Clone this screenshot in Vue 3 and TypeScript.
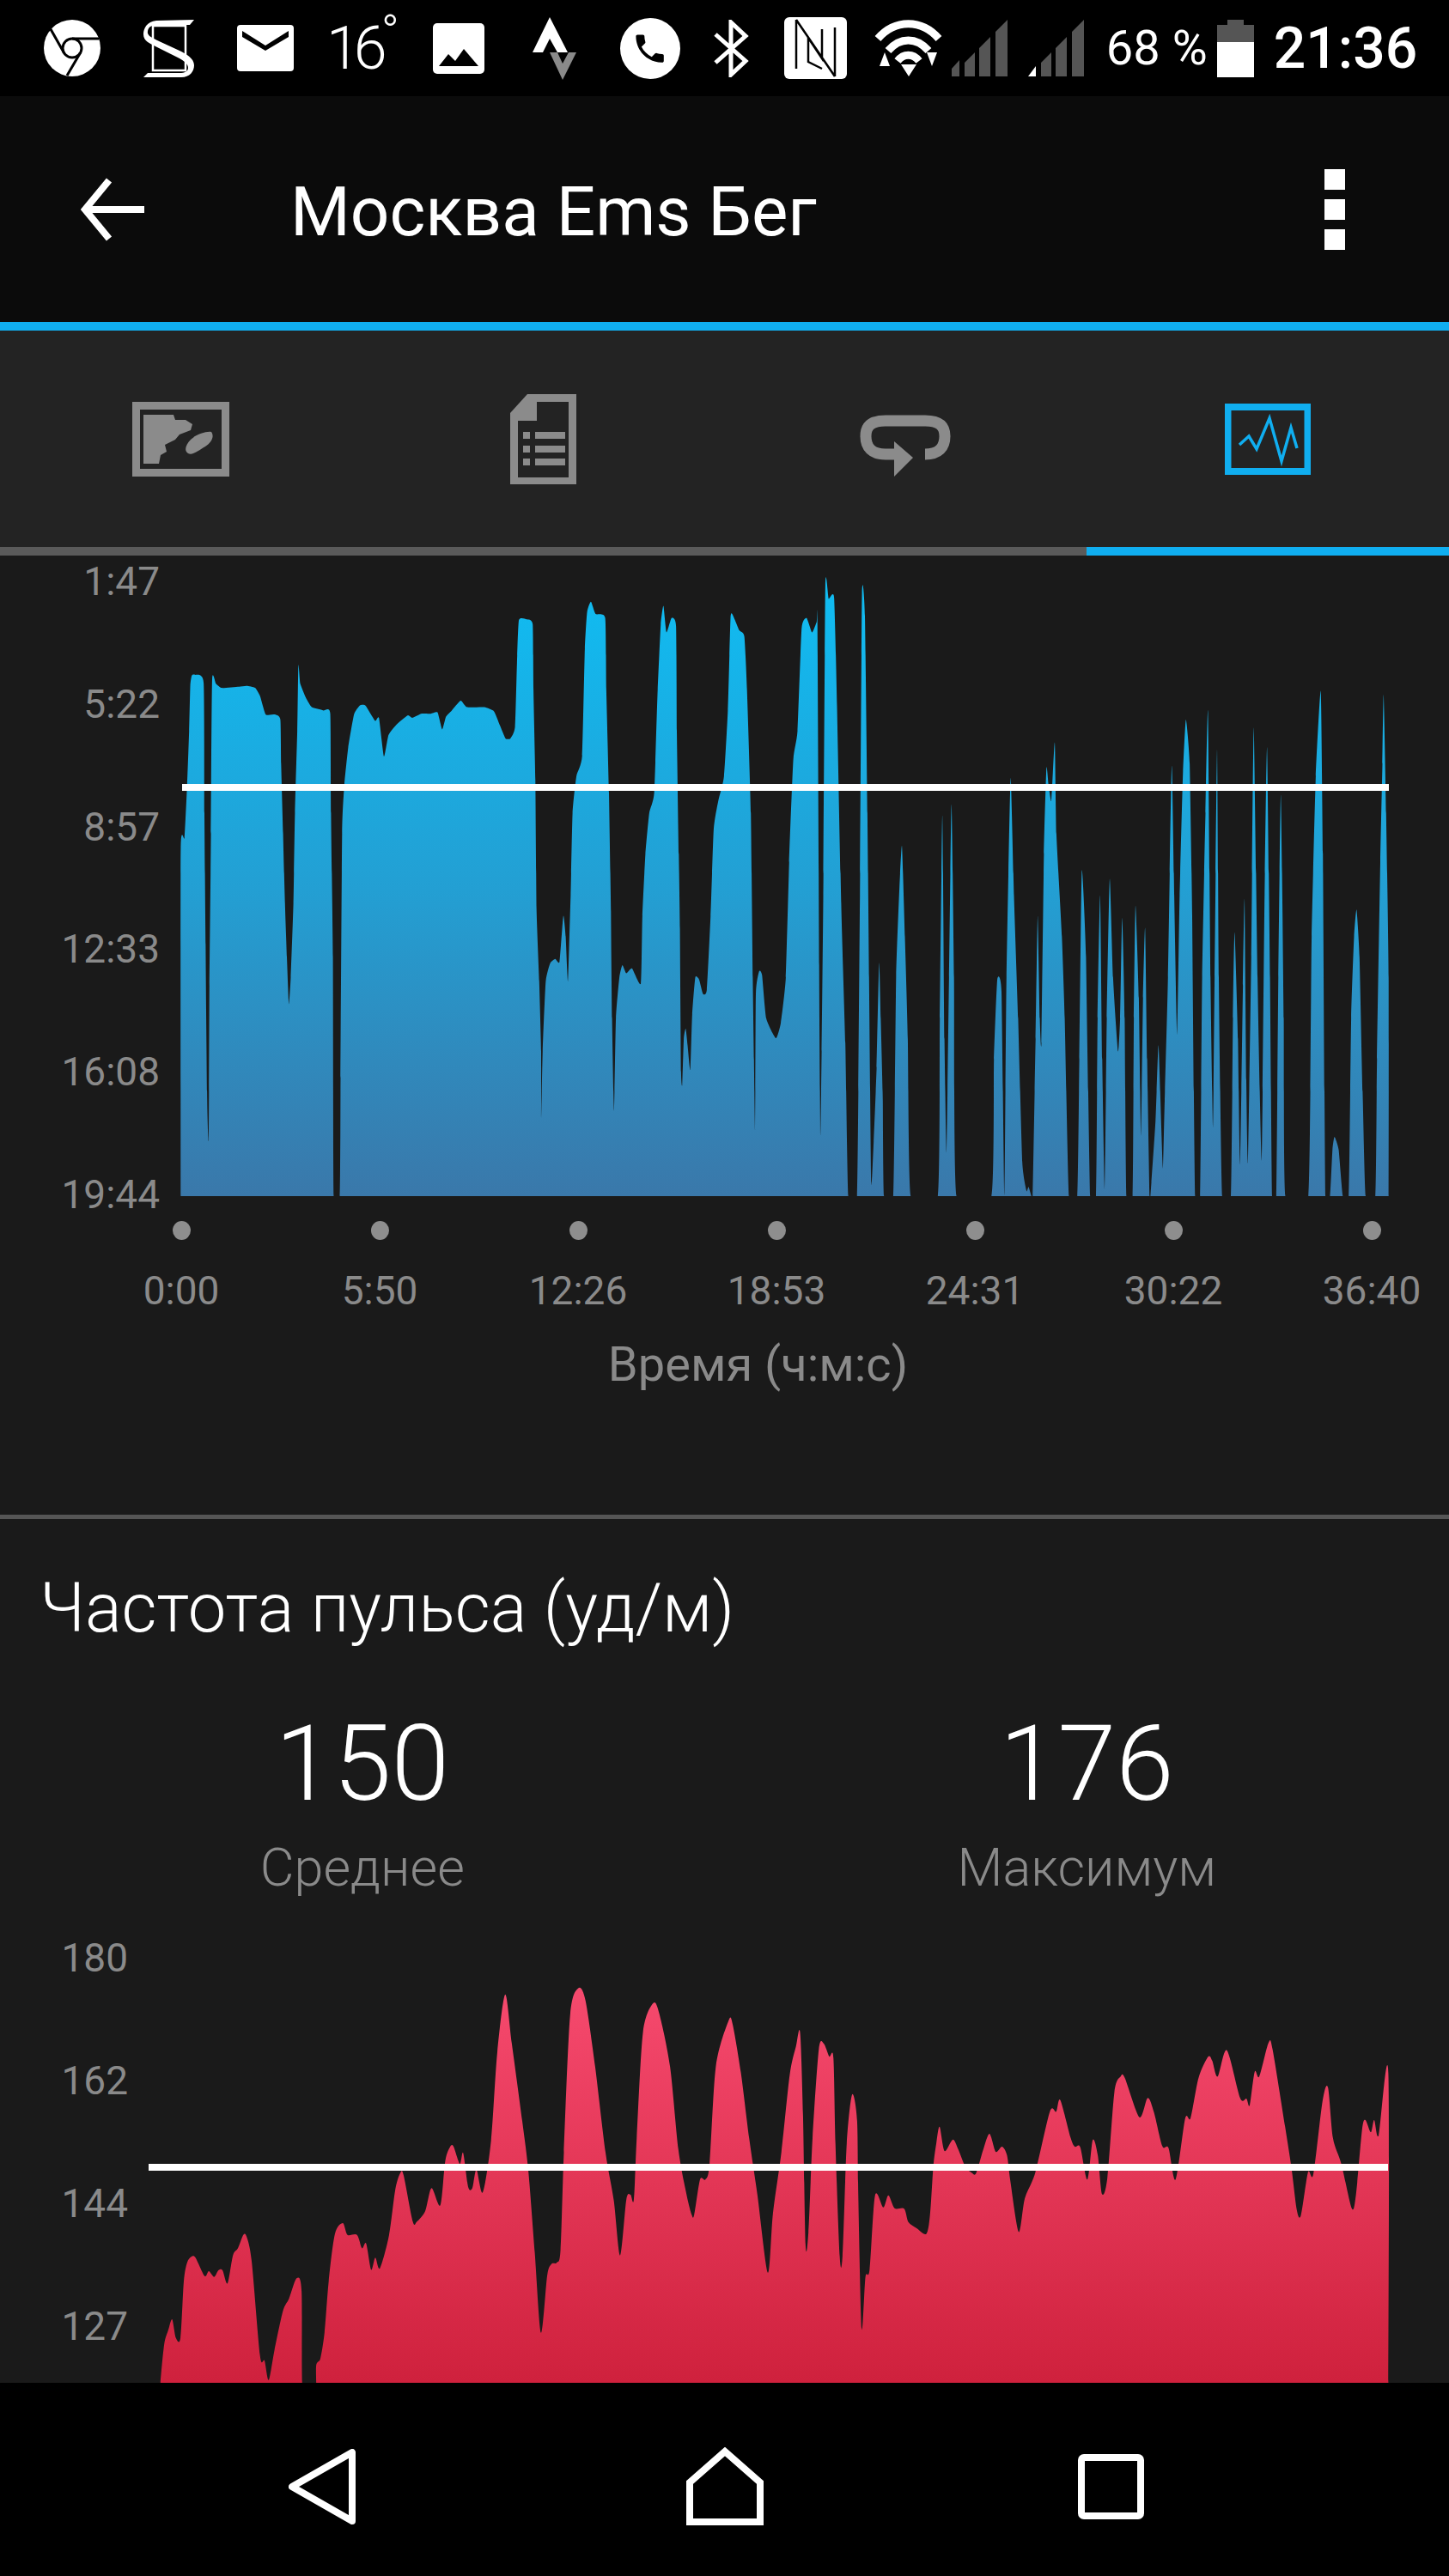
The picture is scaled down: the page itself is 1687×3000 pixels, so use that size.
<template>
  <div class="phone">
    <!-- status bar -->
    <div class="status">
      <svg class="s-chrome" width="66" height="66" viewBox="0 0 66 66">
        <circle cx="33" cy="33" r="33" fill="#fff" />
        <circle cx="33" cy="33" r="11" fill="#fff" stroke="#000" stroke-width="3" />
        <path d="M33 22 H64 M23.5 38.5 L8 11 M42.5 38.5 L27 65" stroke="#000" stroke-width="3" fill="none" />
      </svg>
      <svg class="s-stamina" width="59" height="67" viewBox="0 0 59 67">
        <rect x="11" y="7" width="38" height="52" fill="none" stroke="#fff" stroke-width="2.5" />
        <path d="M59 0 L15 1 C4 2 0 10 0 17 C0 25 8 28 16 32 L40 44 C48 48 52 52 52 56 C52 60 48 62 42 62 L5 62 L0 67 L44 67 C54 67 59 60 59 53 C59 45 50 40 42 36 L16 24 C8 20 4 18 5 13 C6 8 10 6 16 6 L54 6 Z" fill="#fff" />
      </svg>
      <svg class="s-mail" width="66" height="54" viewBox="0 0 66 54">
        <rect width="66" height="54" rx="4" fill="#fff" />
        <path d="M6 7 L33 24 L60 7 V14 L33 30 L6 14 Z" fill="#000" />
      </svg>
      <span class="temp">16</span>
      <span class="deg">°</span>
      <svg class="s-image" width="60" height="59" viewBox="0 0 60 59">
        <rect width="60" height="59" rx="5" fill="#fff" />
        <path d="M7 50 L18 36 L26 44 L36 30 L53 50 Z" fill="#000" />
      </svg>
      <svg class="s-strava" width="53" height="73" viewBox="0 0 53 73">
        <path d="M21 0 L1 41 H13 L21 25 L30 41 H42 Z" fill="#fff" />
        <path d="M21 41 L36 73 L52 41 H43 L36 54 L30 41 Z" fill="#8a8a8a" />
      </svg>
      <svg class="s-phone" width="70" height="71" viewBox="0 0 70 71">
        <ellipse cx="35" cy="35.5" rx="35" ry="35.5" fill="#fff" />
        <path transform="translate(13 14) scale(1.8)" d="M6.62 10.79c1.44 2.83 3.76 5.14 6.59 6.59l2.2-2.2c.27-.27.67-.36 1.02-.24 1.12.37 2.33.57 3.57.57.55 0 1 .45 1 1V20c0 .55-.45 1-1 1-9.39 0-17-7.61-17-17 0-.55.45-1 1-1h3.5c.55 0 1 .45 1 1 0 1.25.2 2.45.57 3.57.11.35.03.74-.25 1.02l-2.2 2.2z" fill="#000" />
      </svg>
      <svg class="s-bt" width="42" height="67" viewBox="0 0 42 67">
        <path d="M3 17 L38 48 L21 64 V3 L38 19 L3 50" fill="none" stroke="#fff" stroke-width="5" />
      </svg>
      <svg class="s-nfc" width="73" height="72" viewBox="0 0 73 72">
        <rect width="73" height="72" rx="6" fill="#fff" />
        <path d="M14 3 L59 69 M14 3 V60 M59 69 V12 M28 24 V52 L44 60 M44 14 V48 L28 24" fill="none" stroke="#000" stroke-width="2.5" />
      </svg>
      <svg class="s-wifi" width="79" height="66" viewBox="0 0 79 66">
        <path d="M4 22 C24 -1 55 -1 75 22 M16 36 C30 20 49 20 63 36 M27 48 C34 39 45 39 52 48" fill="none" stroke="#fff" stroke-width="9" />
        <path d="M31 52 H49 L40 66 Z M6 54 L12 38 L18 54 Z M61 38 H73 L67 54 Z" fill="#fff" />
      </svg>
      <svg class="s-signal" width="65" height="66" viewBox="0 0 65 66">
        <path d="M0 66 V57 L9 47 V66 Z M15 66 V50 L27 38 V66 Z M32 66 V33 L45 20 V66 Z M51 66 V14 L65 0 V66 Z" fill="#555" />
      </svg>
      <svg class="s-signal2" width="65" height="66" viewBox="0 0 65 66">
        <path d="M0 66 L9 54 V66 Z" fill="#fff" />
        <path d="M15 66 V50 L27 38 V66 Z M32 66 V33 L45 20 V66 Z M51 66 V14 L65 0 V66 Z" fill="#555" />
      </svg>
      <span class="percent">68 %</span>
      <svg class="s-battery" width="43" height="67" viewBox="0 0 43 67">
        <path d="M12 0 H31 V6 H43 V26 H0 V6 H12 Z" fill="#555" />
        <rect y="26" width="43" height="41" fill="#fff" />
      </svg>
      <span class="clock">21:36</span>
    </div>

    <!-- app bar -->
    <div class="appbar">
      <svg class="back" width="74" height="74" viewBox="0 0 74 74">
        <path d="M74 37 H6 M33 3 L5 37 L33 71" fill="none" stroke="#fff" stroke-width="8" />
      </svg>
      <span class="title">Москва Ems Бег</span>
      <div class="menu"><i></i><i></i><i></i></div>
    </div>
    <div class="blue-line"></div>

    <!-- tabs -->
    <div class="tabs">
      <div class="tab">
        <svg width="113" height="87" viewBox="0 0 113 87">
          <rect x="4.5" y="4.5" width="104" height="78" fill="none" stroke="#8b8b8b" stroke-width="9" />
          <path d="M13 15 H48 L50 21 L62 21 L70 26 L68 33 L55 38 L50 44 L38 50 L40 58 L33 62 L31 72 H13 Z" fill="#8b8b8b" />
          <path d="M92 35 C96 40 92 48 85 52 C78 56 70 63 65 60 C60 57 62 50 68 44 C74 38 86 34 92 35 Z" fill="#8b8b8b" />
        </svg>
      </div>
      <div class="tab">
        <svg width="77" height="105" viewBox="0 0 77 105">
          <path d="M20 0 H77 V105 H0 V22 Z" fill="#8b8b8b" />
          <path d="M31 9 H68 V97 H9 V31 H31 Z" fill="#232323" />
          <path d="M29 44 H64 V52 H29 Z M29 60 H64 V68 H29 Z M29 75 H64 V83 H29 Z" fill="#8b8b8b" />
          <path d="M15 44 H23 V52 H15 Z M15 60 H23 V68 H15 Z M15 75 H23 V83 H15 Z" fill="#8b8b8b" />
        </svg>
      </div>
      <div class="tab tab-loop">
        <svg width="106" height="72" viewBox="0 0 106 72">
          <path d="M44 46 H30 C14 46 7 38 7 25 C7 13 14 7 30 7 H76 C92 7 99 13 99 25 C99 38 92 46 76 46" fill="none" stroke="#8b8b8b" stroke-width="13" />
          <path d="M40 31 L62 50 L40 72 Z" fill="#8b8b8b" />
        </svg>
      </div>
      <div class="tab">
        <svg width="100" height="83" viewBox="0 0 100 83">
          <rect x="3.5" y="4" width="93" height="75" fill="none" stroke="#10aef0" stroke-width="8" />
          <path d="M17 48 L28 38 L37 53 L52 17 L66 67 L77 28 L84 52" fill="none" stroke="#10aef0" stroke-width="3.5" />
        </svg>
      </div>
    </div>
    <div class="indicator"><div class="ind-gray"></div><div class="ind-blue"></div></div>

    <div class="content">
      <!-- pace chart -->
      <section class="pace">
        <div class="chart-row chart-blue">
          <div class="ylabels">
            <span v-for="l in paceLabels" :key="l">{{ l }}</span>
          </div>
          <svg width="1501" height="768" viewBox="186 650 1501 768">
            <defs>
              <linearGradient id="blueFill" gradientUnits="userSpaceOnUse" x1="0" y1="680" x2="0" y2="1393">
                <stop offset="0" stop-color="#10bcf2" />
                <stop offset="0.5" stop-color="#239fd3" />
                <stop offset="1" stop-color="#3a78aa" />
              </linearGradient>
              <clipPath id="blueClip"><rect x="186" y="650" width="1501" height="743" /></clipPath>
            </defs>
            <path :d="bluePath" fill="url(#blueFill)" clip-path="url(#blueClip)" />
            <rect x="212" y="913" width="1405" height="8" fill="#fff" />
          </svg>
        </div>
        <div class="xaxis dots">
          <span v-for="t in timeLabels" :key="t"><i></i></span>
        </div>
        <div class="xaxis times">
          <span v-for="t in timeLabels" :key="t">{{ t }}</span>
        </div>
        <div class="axis-name">Время (ч:м:с)</div>
      </section>

      <div class="divider"></div>

      <!-- heart rate -->
      <section class="pulse">
        <h2>Частота пульса (уд/м)</h2>
        <div class="stats">
          <div class="stat">
            <div class="value">150</div>
            <div class="caption">Среднее</div>
          </div>
          <div class="stat">
            <div class="value">176</div>
            <div class="caption">Максимум</div>
          </div>
        </div>
        <div class="chart-row chart-red">
          <div class="ylabels">
            <span v-for="l in pulseLabels" :key="l">{{ l }}</span>
          </div>
          <svg width="1538" height="522" viewBox="149 2253 1538 522">
            <defs>
              <linearGradient id="redFill" gradientUnits="userSpaceOnUse" x1="0" y1="2315" x2="0" y2="2775">
                <stop offset="0" stop-color="#f64a6e" />
                <stop offset="1" stop-color="#cf213d" />
              </linearGradient>
            </defs>
            <path :d="redPath" fill="url(#redFill)" />
            <rect x="173" y="2520" width="1443" height="8" fill="#fff" />
          </svg>
        </div>
      </section>
    </div>

    <!-- android nav -->
    <div class="navbar">
      <svg class="nav-back" width="78" height="88" viewBox="0 0 78 88">
        <path d="M74 4 V84 L4 44 Z" fill="none" stroke="#fff" stroke-width="8" stroke-linejoin="round" />
      </svg>
      <svg class="nav-home" width="90" height="92" viewBox="0 0 90 92">
        <path d="M45 5 L86 41 V87 H4 V41 Z" fill="none" stroke="#fff" stroke-width="8" />
      </svg>
      <svg class="nav-square" width="77" height="76" viewBox="0 0 77 76">
        <rect x="4" y="4" width="69" height="68" rx="3" fill="none" stroke="#fff" stroke-width="8" />
      </svg>
    </div>
  </div>
</template>

<script setup lang="ts">
const paceLabels = ['1:47', '5:22', '8:57', '12:33', '16:08', '19:44']
const timeLabels = ['0:00', '5:50', '12:26', '18:53', '24:31', '30:22', '36:40']
const pulseLabels = ['180', '162', '144', '127']

// traced outlines, [x, y] in crop coordinates
const blueA = [[68,1533],[68,690],[78,660],[85,530],[90,400],[93,290],[97,265],[105,263],[128,283],[130,600],[133,920],[137,1295],[141,1395],[143,1020],[147,650],[150,275],[160,285],[175,295],[220,292],[240,290],[262,295],[275,315],[290,360],[315,360],[328,372],[330,480],[335,650],[340,820],[345,950],[350,1065],[355,1000],[362,820],[366,600],[372,400],[375,240],[380,285],[395,320],[410,342],[440,350],[458,358],[460,600],[465,950],[467,1533],[483,1533],[485,1245],[489,650],[495,530],[505,440],[520,360],[535,338],[550,338],[575,375],[585,368],[598,462],[610,410],[630,385],[660,362],[672,368],[695,358],[720,358],[738,355],[750,396],[760,365],[775,350],[798,326],[815,342],[860,342],[885,352],[900,385],[915,418],[928,418],[940,390],[945,235],[950,130],[970,128],[986,140],[988,300],[993,520],[996,830],[1003,1010],[1008,1180],[1008,1350],[1012,1180],[1020,1010],[1032,965],[1045,955],[1056,962],[1066,850],[1072,900],[1078,1010],[1085,800],[1090,600],[1100,510],[1115,460],[1122,200],[1128,110],[1138,85],[1150,115],[1175,125],[1178,300],[1185,550],[1190,840],[1193,1100],[1198,1325],[1203,1100],[1212,1000],[1220,970],[1230,990],[1245,978],[1268,1015],[1272,850],[1280,700],[1290,600],[1303,550],[1312,300],[1320,140],[1327,95],[1335,160],[1348,125],[1360,145],[1362,400],[1367,700],[1370,880],[1373,1230],[1376,1262],[1380,1150],[1385,1125],[1390,1165],[1397,1225],[1402,1090],[1410,1000],[1420,1005],[1430,1040],[1440,1030],[1450,850],[1458,640],[1470,570],[1485,510],[1495,350],[1502,125],[1508,118],[1525,155],[1538,170],[1545,300],[1555,600],[1560,1000],[1563,1200],[1566,1370]]
const blueB = [[0,1040],[8,985],[15,995],[25,1100],[48,1148],[60,1110],[72,1000],[80,720],[90,470],[100,400],[110,150],[122,125],[135,160],[146,135],[148,135],[152,970],[155,1385],[158,1180],[162,800],[167,45],[175,78],[188,75],[195,340],[205,820],[215,1160],[222,1533],[243,1533],[250,800],[255,65],[262,120],[268,600],[272,1000],[277,1500],[283,1400],[290,1220],[296,965],[300,1100],[305,1300],[308,1533],[330,1533],[337,1000],[345,780],[351,680],[358,900],[365,1150],[372,1533],[437,1533],[442,1100],[448,605],[453,1150],[458,1425],[464,1000],[470,578],[476,1000],[482,1533],[566,1533],[572,1200],[580,1005],[590,1035],[597,1530],[602,1000],[612,515],[620,800],[630,1100],[640,1450],[650,1520],[655,1510],[662,1533],[665,1533],[672,1150],[677,850],[682,1100],[686,1160],[692,700],[698,490],[703,530],[710,570],[718,428],[722,650],[735,900],[742,1100],[752,1533],[772,1533],[777,1200],[783,740],[793,950],[803,1533],[817,1533],[821,1100],[827,800],[832,1200],[838,1515],[843,1100],[850,760],[858,1000],[870,1180],[875,1100],[880,855],[886,1100],[890,1533],[905,1533],[908,1100],[912,825],[920,1050],[925,1385],[930,1050],[935,880],[940,1200],[946,1533],[950,1500],[960,1350],[967,1165],[972,1300],[978,1465],[982,1300],[990,1000],[999,485],[1005,800],[1012,1140],[1018,800],[1026,500],[1033,372],[1042,480],[1048,850],[1055,1533],[1067,1533],[1072,1000],[1080,600],[1086,352],[1092,1000],[1098,1365],[1102,1000],[1108,445],[1112,1000],[1120,1533],[1141,1533],[1146,1100],[1150,890],[1158,1150],[1163,1455],[1170,1020],[1174,810],[1178,1250],[1182,1450],[1190,950],[1196,392],[1205,1000],[1215,1445],[1222,800],[1228,440],[1235,1000],[1240,1533],[1250,1533],[1255,1000],[1261,555],[1268,1100],[1272,1533],[1327,1533],[1335,900],[1345,510],[1357,303],[1362,700],[1368,1533],[1379,1533],[1385,1420],[1390,1388],[1400,1420],[1410,1533],[1424,1533],[1430,1100],[1437,900],[1443,835],[1450,950],[1458,1300],[1465,1533],[1488,1533],[1492,1200],[1500,720],[1505,480],[1508,312],[1514,600],[1520,1000],[1520,1533]]
const redA = [[76,1500],[76,1455],[85,1320],[95,1270],[104,1233],[113,1298],[124,1298],[132,1100],[140,1035],[150,1015],[160,1018],[182,1082],[192,1065],[205,1085],[215,1062],[225,1062],[237,1108],[250,1010],[262,985],[275,938],[283,945],[295,1030],[315,1360],[326,1378],[336,1445],[350,1340],[370,1205],[385,1160],[403,1090],[415,1135],[418,1500],[448,1500],[450,1395],[460,1370],[470,1280],[480,1100],[495,935],[514,897],[525,938],[548,938],[560,985],[570,968],[582,1060],[592,1018],[603,1055],[625,940],[640,780],[652,722],[660,730],[682,892],[692,892],[712,855],[727,775],[748,835],[760,680],[772,630],[780,630],[795,690],[803,652],[815,770],[825,775],[835,710],[850,790],[870,610],[885,300],[904,98],[920,270],[945,540],[960,720],[975,1000],[990,1280],[1005,1080],[1015,1040],[1028,1035],[1037,990],[1045,650],[1060,170],[1080,76],[1097,120],[1120,350],[1145,650],[1165,820],[1180,1010],[1195,815],[1205,798],[1213,815],[1220,600],[1235,230],[1260,128],[1275,170],[1300,350],[1320,640],[1340,800],[1352,868],[1358,868],[1372,745],[1385,745],[1395,690],[1410,350],[1440,192],[1450,200],[1470,370],[1490,600],[1510,800],[1535,1070]]
const redB = [[0,860],[20,650],[40,380],[55,280],[65,232],[72,520],[78,970],[85,930],[95,600],[110,290],[122,270],[135,315],[145,320],[150,620],[160,1012],[167,1012],[177,620],[190,448],[202,540],[205,820],[213,1265],[222,1085],[232,1060],[245,800],[265,842],[277,800],[292,845],[315,847],[325,893],[345,915],[368,935],[377,870],[385,700],[392,620],[400,560],[412,645],[432,605],[445,640],[462,700],[478,722],[488,722],[505,640],[520,585],[535,648],[550,630],[562,660],[570,750],[590,928],[605,810],[630,720],[665,508],[680,508],[690,467],[715,600],[725,630],[738,632],[755,745],[768,607],[780,660],[790,795],[803,740],[820,440],[835,385],[845,390],[880,527],[900,460],[915,510],[935,628],[950,635],[967,745],[990,532],[1003,530],[1022,390],[1045,316],[1055,330],[1068,385],[1090,293],[1122,460],[1137,462],[1145,485],[1157,368],[1168,385],[1190,268],[1200,290],[1230,560],[1245,700],[1258,850],[1268,870],[1285,720],[1298,725],[1320,470],[1333,423],[1345,600],[1365,690],[1390,845],[1400,800],[1415,570],[1423,537],[1436,580],[1444,537],[1455,590],[1478,375],[1478,1500]]

type Pt = number[]
const mapPts = (pts: Pt[], x0: number, sx: number, y0: number, sy: number): Pt[] =>
  pts.map(([x, y]) => [x0 + x * sx, y0 + y * sy])

// catmull-rom, both curves are round at the top
const smoothPath = (pts: Pt[], k: number) => {
  let d = `M${pts[0][0].toFixed(1)} ${pts[0][1].toFixed(1)}`
  for (let i = 0; i < pts.length - 1; i++) {
    const p0 = pts[Math.max(i - 1, 0)]
    const p1 = pts[i]
    const p2 = pts[i + 1]
    const p3 = pts[Math.min(i + 2, pts.length - 1)]
    const c1x = p1[0] + (p2[0] - p0[0]) * k
    const c1y = p1[1] + (p2[1] - p0[1]) * k
    const c2x = p2[0] - (p3[0] - p1[0]) * k
    const c2y = p2[1] - (p3[1] - p1[1]) * k
    d += `C${c1x.toFixed(1)} ${c1y.toFixed(1)} ${c2x.toFixed(1)} ${c2y.toFixed(1)} ${p2[0].toFixed(1)} ${p2[1].toFixed(1)}`
  }
  return d + 'Z'
}

const bluePath = smoothPath([
  ...mapPts(blueA, 180, 700 / 1568, 660, 750 / 1568),
  ...mapPts(blueB, 880, 760 / 1568, 660, 750 / 1568),
], 0.08)
const redPath = smoothPath([
  ...mapPts(redA, 150, 760 / 1568, 2290, 1 / 3),
  ...mapPts(redB, 900, 760 / 1568, 2290, 1 / 3),
], 0.14)
</script>

<style scoped>
.phone {
  width: 1687px;
  height: 3000px;
  display: flex;
  flex-direction: column;
  overflow: hidden;
  background: #1a1a1a;
  font-family: Roboto, "Noto Sans", sans-serif;
  color: #fff;
}

.status {
  height: 112px;
  flex: none;
  background: #000;
  display: flex;
  align-items: center;
  padding-left: 51px;
}
.status svg { flex: none; }
.s-stamina { margin-left: 50px; }
.s-mail { margin-left: 50px; }
.temp {
  margin-left: 38px;
  font-size: 70px;
  font-weight: 300;
  letter-spacing: -7px;
  line-height: 112px;
}
.deg {
  font-size: 56px;
  font-weight: 300;
  line-height: 56px;
  margin-bottom: 36px;
}
.s-image { margin-left: 39px; }
.s-strava { margin-left: 55px; }
.s-phone { margin-left: 50px; }
.s-bt { margin-left: 38px; }
.s-nfc { margin-left: 41px; }
.s-wifi { margin-left: 32px; }
.s-signal { margin-left: 11px; }
.s-signal2 { margin-left: 24px; }
.percent {
  margin-left: 26px;
  width: 114px;
  font-size: 56px;
  white-space: nowrap;
}
.s-battery { margin-left: 15px; }
.clock {
  margin-left: 23px;
  font-size: 66px;
  font-weight: 500;
}

.appbar {
  height: 263px;
  flex: none;
  background: #0b0b0b;
  display: flex;
  align-items: center;
  padding-left: 94px;
}
.title {
  margin-left: 170px;
  margin-top: 7px;
  font-size: 80px;
}
.menu {
  margin-left: auto;
  margin-right: 121px;
  display: flex;
  flex-direction: column;
  gap: 11px;
}
.menu i {
  width: 24px;
  height: 24px;
  background: #fff;
}
.blue-line {
  height: 10px;
  flex: none;
  background: #10aef0;
}

.tabs {
  height: 252px;
  flex: none;
  background: #232323;
  display: grid;
  grid-template-columns: repeat(4, 1fr);
}
.tab {
  display: flex;
  align-items: center;
  justify-content: center;
}
.tab-loop { padding-top: 16px; }
.indicator {
  height: 10px;
  flex: none;
  display: flex;
}
.ind-gray { flex: 3; background: #5a5a5a; }
.ind-blue { flex: 1; background: #10aef0; }

.content {
  flex: 1;
  min-height: 0;
  overflow: hidden;
}
.pace {
  height: 1117px;
  padding-top: 3px;
  box-sizing: border-box;
}
.chart-row { display: flex; }
.chart-row svg { flex: none; display: block; }
.ylabels {
  flex: none;
  display: flex;
  flex-direction: column;
  text-align: right;
  font-size: 46px;
  line-height: 54px;
  color: #8a8a8a;
}
.chart-blue .ylabels {
  width: 186px;
  justify-content: space-between;
}
.chart-red .ylabels {
  width: 149px;
  gap: 89px;
}
.xaxis {
  display: flex;
  justify-content: space-between;
  padding: 0 90px 0 211px;
  color: #8a8a8a;
}
.xaxis span {
  width: 0;
  display: flex;
  justify-content: center;
  white-space: nowrap;
}
.dots {
  margin-top: 4px;
  height: 22px;
}
.dots i {
  flex: none;
  width: 21px;
  height: 22px;
  border-radius: 50%;
  background: #8e8e8e;
}
.times {
  margin-top: 32px;
  font-size: 46px;
  line-height: 54px;
}
.axis-name {
  margin-top: 24px;
  padding-left: 78px;
  text-align: center;
  font-size: 56px;
  line-height: 70px;
  color: #8a8a8a;
}
.divider {
  height: 5px;
  background: #555;
}
.pulse {
  padding-top: 59px;
}
h2 {
  margin: 0 0 0 46px;
  font-size: 79.5px;
  font-weight: 300;
  line-height: 90px;
}
.stats {
  display: grid;
  grid-template-columns: 1fr 1fr;
  margin-top: 72px;
  text-align: center;
}
.value {
  font-size: 122px;
  font-weight: 300;
  line-height: 130px;
}
.caption {
  margin-top: 15px;
  font-size: 61.2px;
  font-weight: 300;
  line-height: 80px;
  color: #8a8a8a;
}
.chart-red {
  margin-top: 38px;
}

.navbar {
  height: 225px;
  flex: none;
  background: #000;
  display: flex;
  align-items: center;
  padding-top: 16px;
  padding-left: 336px;
  box-sizing: border-box;
}
.nav-home { margin-left: 385px; }
.nav-square { margin-left: 366px; }
</style>

<style>
html, body { margin: 0; background: #000; }
</style>
